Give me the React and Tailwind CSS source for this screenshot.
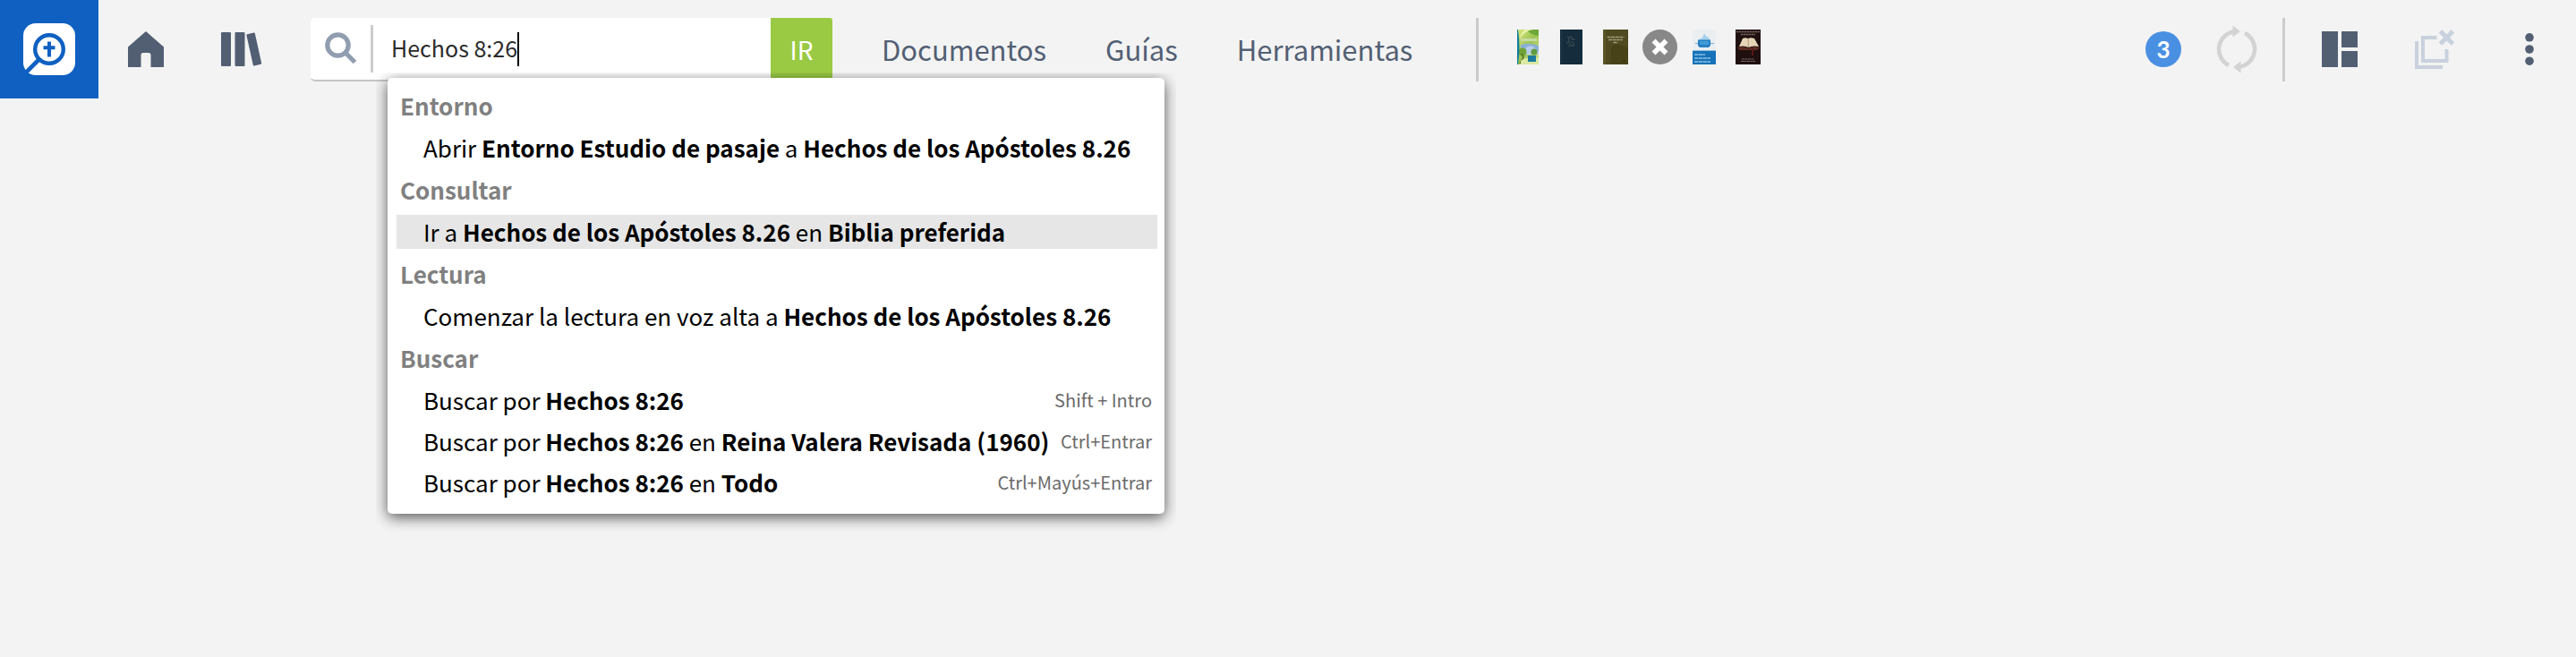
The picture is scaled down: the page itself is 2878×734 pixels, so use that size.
const sections = [
  {
    title: 'Entorno',
    items: [
      { text: ['Abrir ', <b key="a">Entorno Estudio de pasaje</b>, ' a ', <b key="b">Hechos de los Apóstoles 8.26</b>] },
    ],
  },
  {
    title: 'Consultar',
    items: [
      { text: ['Ir a ', <b key="a">Hechos de los Apóstoles 8.26</b>, ' en ', <b key="b">Biblia preferida</b>], active: true },
    ],
  },
  {
    title: 'Lectura',
    items: [{ text: ['Comenzar la lectura en voz alta a ', <b key="a">Hechos de los Apóstoles 8.26</b>] }],
  },
  {
    title: 'Buscar',
    items: [
      { text: ['Buscar por ', <b key="a">Hechos 8:26</b>], keys: 'Shift + Intro' },
      { text: ['Buscar por ', <b key="a">Hechos 8:26</b>, ' en ', <b key="b">Reina Valera Revisada (1960)</b>], keys: 'Ctrl+Entrar' },
      { text: ['Buscar por ', <b key="a">Hechos 8:26</b>, ' en ', <b key="b">Todo</b>], keys: 'Ctrl+Mayús+Entrar' },
    ],
  },
];

function Logo() {
  return (
    <svg className="size-[58px]" viewBox="0 0 58 58" aria-hidden="true">
      <rect width="58" height="58" rx="14" fill="#fff" />
      <circle cx="29" cy="29" r="15.8" fill="none" stroke="#0f60c1" strokeWidth="4.4" />
      <path d="M17.5 40.5 L0 58" stroke="#0f60c1" strokeWidth="4.6" />
      <path d="M29 20.5 V37.5 M22.5 27.2 H35.5" stroke="#0f60c1" strokeWidth="4" />
    </svg>
  );
}

function HomeIcon() {
  return (
    <svg className="size-10" viewBox="0 0 40 40" fill="#525f73" aria-hidden="true">
      <path d="M20 0 L40 17.5 V40 H25.5 V26.5 Q25.5 24 23 24 H17 Q14.5 24 14.5 26.5 V40 H0 V17.5 Z" />
    </svg>
  );
}

function BooksIcon() {
  return (
    <svg className="h-[38px] w-[46px]" viewBox="0 0 46 38" fill="#525f73" aria-hidden="true">
      <rect width="11" height="38" rx="1" />
      <rect x="15.500" width="11" height="38" rx="1" />
      <rect x="32" y="1" width="9.600" height="36" rx="1" transform="rotate(-12.500 36.800 19)" />
    </svg>
  );
}

function SearchIcon() {
  return (
    <svg className="size-9 shrink-0" viewBox="0 0 36 36" fill="none" stroke="#919eb0" aria-hidden="true">
      <circle cx="14.500" cy="14.500" r="11.700" strokeWidth="5.200" />
      <path d="M22 22 L33.500 33.500" strokeWidth="5.200" />
    </svg>
  );
}

function Covers() {
  return (
    <div className="flex items-center pb-[5px]">
      <button type="button" aria-label="Primer libro">
        <svg className="h-[39px] w-6" viewBox="0 0 24 39" aria-hidden="true">
          <defs>
            <linearGradient id="leaf" x1="0" y1="0" x2="1" y2="1">
              <stop offset="0" stopColor="#d8e67c" />
              <stop offset="0.500" stopColor="#9cc452" />
              <stop offset="1" stopColor="#cfe28c" />
            </linearGradient>
          </defs>
          <rect width="24" height="39" fill="url(#leaf)" />
          <path d="M10 0 Q15 6 24 7 V0 Z" fill="#6fa83a" />
          <path d="M3 10 Q9 1 18 0 H9 Q4 3 3 10Z" fill="#e9f2a6" />
          <rect x="4" y="10" width="18" height="3" fill="#c6d9a4" />
          <path d="M4 17 Q14 14 24 18 V28 H4 Z" fill="#8bb0d6" />
          <path d="M10 20 Q16 16 20 21 T24 24 V28 H10Z" fill="#b7cce6" />
          <circle cx="6" cy="25" r="4.500" fill="#6fa234" />
          <path d="M5 27 L7 31 L3 38" stroke="#5b6d2a" strokeWidth="1.500" fill="none" />
          <circle cx="19" cy="25" r="3.500" fill="#5f9b3d" />
          <path d="M4 35 Q12 29 24 32 V39 H4Z" fill="#dbe9a2" />
          <rect x="12" y="29" width="9" height="7" fill="#1d7a9c" />
          <path d="M0 0 H1 Q4 20 1 39 H0Z" fill="#177d9a" />
        </svg>
      </button>
      <button type="button" aria-label="Segundo libro" className="ml-6">
        <svg className="h-[39px] w-[25px]" viewBox="0 0 25 39" aria-hidden="true">
          <rect width="25" height="39" fill="#142c3b" />
          <path d="M2 0 V39" stroke="#1d3848" />
          <path d="M8 9 Q10 6 10 14 M10 9 Q15 6 13 12 M14 11 h3 M7 16 Q9 12 12 17 M12 14 Q16 13 15 18 M9 18 H16" stroke="#4c5a5c" strokeWidth="0.800" fill="none" />
        </svg>
      </button>
      <button type="button" aria-label="Santa Biblia Reina Valera Revisada (1960)" className="ml-[23px]">
        <svg className="h-[39px] w-7" viewBox="0 0 28 39" aria-hidden="true">
          <rect width="28" height="39" fill="#4f4a1f" />
          <path d="M0 0 H3 V39 H0Z" fill="#5b5627" />
          <path d="M10 18 Q20 14 28 22 V39 H8Z" fill="#484218" />
          <path d="M4.500 8.500 H23.500 M6 11.500 H22 M11.500 14.500 H16.500" stroke="#a19d7f" strokeWidth="1.300" strokeDasharray="4 0.600" />
          <path d="M22 35 H25" stroke="#2f2b0d" />
        </svg>
      </button>
      <button type="button" aria-label="Cerrar" className="ml-4">
        <svg className="size-[39px]" viewBox="0 0 39 39" aria-hidden="true">
          <circle cx="19.500" cy="19.500" r="19.500" fill="#888" />
          <path d="M12.500 12.500 L26.500 26.500 M26.500 12.500 L12.500 26.500" stroke="#fff" strokeWidth="5.600" />
        </svg>
      </button>
      <button type="button" aria-label="Fiestas y sacrificios de los israelitas" className="ml-[17px]">
        <svg className="h-[39px] w-[26px]" viewBox="0 0 26 39" aria-hidden="true">
          <rect width="26" height="39" fill="#ebeef0" />
          <path d="M7 12 Q9 9 11 9 Q12 5 14 5 Q15 9 17 8 L20 12Z" fill="#a4d0ec" />
          <path d="M3 15.500 H24" stroke="#7db6dc" strokeWidth="1.200" />
          <path d="M6 11.500 H20 V18 L18 20 H8 L6 18Z" fill="#2580c3" />
          <rect x="8" y="13" width="10" height="4" fill="#3f9ad8" />
          <rect y="23" width="26" height="1" fill="#8fc0e2" />
          <rect y="24" width="26" height="15" fill="#1672b9" />
          <path d="M2 28 H14 M2 32 H20 M2 36 H20" stroke="#8fc0e4" strokeWidth="1.600" strokeDasharray="4.500 0.500" />
        </svg>
      </button>
      <button type="button" aria-label="Sexto libro" className="ml-[22px]">
        <svg className="h-[39px] w-7" viewBox="0 0 28 39" aria-hidden="true">
          <rect width="28" height="39" fill="#1f0f0e" />
          <path d="M1 2.500 H27 M6 5.500 H22" stroke="#75655f" strokeWidth="1.400" strokeDasharray="2.500 0.500" />
          <path d="M4 19 L8 10 Q11 8.500 14 10 Q17 8.500 21 10 L26 19 Q19 17.500 14.500 20 Q10 17.500 4 19Z" fill="#e6d6b8" />
          <path d="M14 10 L14.500 20" stroke="#a98c66" strokeWidth="0.800" />
          <path d="M2 20 Q9 18 14.500 21 Q20 18 27 20 L24 23 H5Z" fill="#5d2c22" />
          <path d="M18 21 H20 V29 H18Z" fill="#5d1815" />
          <path d="M7 33 H21 M6 35.500 H22" stroke="#746a67" strokeWidth="1.200" strokeDasharray="3 0.500" />
        </svg>
      </button>
    </div>
  );
}

function SyncIcon() {
  return (
    <svg className="h-[54px] w-[46px]" viewBox="0 0 46 54" aria-hidden="true">
      <g fill="none" stroke="#d3d3d3" strokeWidth="4.600">
        <path d="M14 45 A20 20 0 0 1 20.500 7.300" />
        <path d="M32 9 A20 20 0 0 1 25.500 46.700" />
      </g>
      <path d="M18.500 0.500 L27 7 L18.500 13.500Z M27.500 40.500 L19 47 L27.500 53.500Z" fill="#d3d3d3" />
    </svg>
  );
}

function LayoutIcon() {
  return (
    <svg className="size-10" viewBox="0 0 40 40" fill="#525f73" aria-hidden="true">
      <path d="M0 0 H18 V40 H0Z M22 0 H40 V18 H22Z M22 22 H40 V40 H22Z" />
    </svg>
  );
}

function CloseAllIcon() {
  return (
    <svg className="size-11" viewBox="0 0 44 44" fill="none" stroke="#c8d1dd" strokeWidth="4" aria-hidden="true">
      <path d="M2 13 V42 H31" />
      <path d="M24.500 9 H9 V35 H35.500 V22" />
      <path d="M28.500 2 L42.500 16 M42.500 2 L28.500 16" strokeWidth="5" />
    </svg>
  );
}

function Divider() {
  return <span className="h-[71px] w-[3px] shrink-0 bg-[#ccc]" />;
}

function Suggestions() {
  return (
    <div className="absolute top-[67px] left-[86px] z-10 flex w-[868px] flex-col gap-[9px] rounded-[5px] bg-white pt-3 pr-2 pb-4 pl-[10px] text-[26px] leading-[38px] text-black shadow-[0_4px_16px_rgba(0,0,0,0.65)] [clip-path:inset(-5px_-13px_-20px_-13px)]">
      {sections.map((section) => (
        <section key={section.title}>
          <h2 className="mb-[9px] pl-1 font-bold text-[#808080]">{section.title}</h2>
          <ul className="flex flex-col gap-2">
            {section.items.map((item, i) => (
              <li key={i}>
                <button
                  type="button"
                  className={`flex w-full items-center justify-between pr-[6px] pl-[30px] text-left whitespace-nowrap ${item.active ? 'bg-[#e6e6e6]' : ''}`}
                >
                  <span>{item.text}</span>
                  {item.keys && <kbd className="font-[inherit] text-[20px] text-[#6b6b6b]">{item.keys}</kbd>}
                </button>
              </li>
            ))}
          </ul>
        </section>
      ))}
    </div>
  );
}

export default function App() {
  return (
    <div className="min-h-screen bg-[#f3f3f3] font-['Noto_Sans_CJK_SC','Noto_Sans',sans-serif] text-[#525f73]">
      <header className="flex h-[110px] items-center">
        <a href="#inicio" aria-label="Logos" className="flex size-[110px] shrink-0 items-center justify-center bg-[#0f60c1]">
          <Logo />
        </a>
        <button type="button" aria-label="Inicio" className="ml-[33px]">
          <HomeIcon />
        </button>
        <button type="button" aria-label="Biblioteca" className="ml-16">
          <BooksIcon />
        </button>

        <form className="relative ml-[54px] flex h-[71px] w-[583px] shrink-0 rounded-[5px] border-b-2 border-[#c4c4c4] bg-white" onSubmit={(e) => e.preventDefault()}>
          <label htmlFor="command" aria-label="Buscar" className="flex w-[67px] items-center justify-center">
            <SearchIcon />
          </label>
          <span className="mt-2 h-[53px] w-[3px] bg-[#ccc]" />
          <div className="mt-4 flex h-[38px] flex-1 pl-5 text-[25px] text-[#2b2b2b]">
            <input id="command" type="text" defaultValue="Hechos 8:26" autoComplete="off" className="field-sizing-content h-[34px] leading-[34px] outline-none" />
            <span className="w-[2px] bg-black" />
          </div>
          <button type="submit" className="w-[69px] rounded-tr-[3px] bg-[#9aca43] text-[28px] leading-[71px] text-white">
            IR
          </button>
          <Suggestions />
        </form>

        <nav className="ml-[55px] flex gap-[66px] text-[31px] leading-[46px]">
          <a href="#documentos">Documentos</a>
          <a href="#guias">Guías</a>
          <a href="#herramientas">Herramientas</a>
        </nav>
        <div className="ml-[71px] flex items-center gap-[43px]">
          <Divider />
          <Covers />
        </div>

        <div className="ml-auto flex items-center pr-[47px]">
          <button type="button" aria-label="3 notificaciones" className="flex size-10 items-center justify-center rounded-full bg-[#4a90e2] font-['Lato',sans-serif] text-[26px] font-bold text-white">
            3
          </button>
          <button type="button" aria-label="Sincronizar" className="mr-7 ml-[39px]">
            <SyncIcon />
          </button>
          <Divider />
          <button type="button" aria-label="Diseños" className="ml-[41px]">
            <LayoutIcon />
          </button>
          <button type="button" aria-label="Cerrar todo" className="ml-16">
            <CloseAllIcon />
          </button>
          <button type="button" aria-label="Más opciones" className="ml-[79px]">
            <svg className="h-9 w-[10px]" viewBox="0 0 10 36" fill="#525f73" aria-hidden="true">
              <circle cx="5" cy="4.800" r="4.800" />
              <circle cx="5" cy="18" r="4.800" />
              <circle cx="5" cy="31.200" r="4.800" />
            </svg>
          </button>
        </div>
      </header>
    </div>
  );
}
